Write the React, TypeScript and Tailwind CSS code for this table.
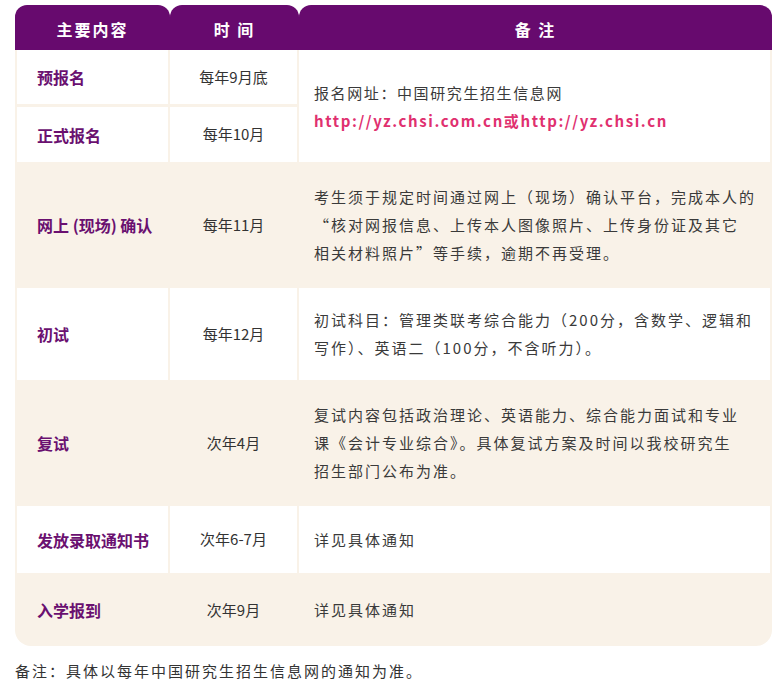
import { Fragment } from "react";

const purple = "text-[#6a1070]";

type Row = {
  label: string;
  time: string;
  note?: React.ReactNode;
  white: boolean;
};

const rows: Row[] = [
  { label: "网上 (现场) 确认", time: "每年11月", white: false, note: (
    <>
      <div>考生须于规定时间通过网上（现场）确认平台，完成本人的</div>
      <div>“核对网报信息、上传本人图像照片、上传身份证及其它</div>
      <div>相关材料照片”等手续，逾期不再受理。</div>
    </>
  ) },
  { label: "初试", time: "每年12月", white: true, note: (
    <>
      <div>初试科目：管理类联考综合能力（200分，含数学、逻辑和</div>
      <div>写作）、英语二（100分，不含听力）。</div>
    </>
  ) },
  { label: "复试", time: "次年4月", white: false, note: (
    <>
      <div>复试内容包括政治理论、英语能力、综合能力面试和专业</div>
      <div>课《会计专业综合》。具体复试方案及时间以我校研究生</div>
      <div>招生部门公布为准。</div>
    </>
  ) },
  { label: "发放录取通知书", time: "次年6-7月", white: true, note: <div>详见具体通知</div> },
  { label: "入学报到", time: "次年9月", white: false, note: <div>详见具体通知</div> },
];

function LabelCell({ text, white }: { text: string; white: boolean }) {
  return (
    <div className={`flex items-center pl-[20px] text-[16px] font-bold ${purple} ${white ? "bg-white" : ""}`}>
      {text}
    </div>
  );
}

function TimeCell({ text, white }: { text: string; white: boolean }) {
  return (
    <div className={`flex items-center justify-center text-[15px] text-[#333] ${white ? "bg-white" : ""}`}>
      {text}
    </div>
  );
}

function NoteCell({ children, white }: { children: React.ReactNode; white: boolean }) {
  return (
    <div className={`flex flex-col justify-center whitespace-nowrap pl-[15px] text-[15px] leading-[28px] tracking-[2px] text-[#3a3a3a] ${white ? "bg-white" : ""}`}>
      {children}
    </div>
  );
}

export default function App() {
  return (
    <div
      className="min-h-[691px] w-[780px] bg-white pt-[5px]"
      style={{ fontFamily: '"Noto Sans CJK SC", "Noto Sans", sans-serif' }}
    >
      <div className="mx-[15px] w-[757px]">
        {/* header tabs */}
        <div className="grid h-[45px] grid-cols-[155px_129px_1fr] bg-white text-[16px] font-bold tracking-[2px] text-white">
          <div className="flex items-center justify-center rounded-t-[12px] bg-[#670a6e] pt-[3px]">主要内容</div>
          <div className="flex items-center justify-center rounded-t-[12px] bg-[#670a6e] pt-[3px]">时 间</div>
          <div className="flex items-center justify-center rounded-t-[12px] bg-[#670a6e] pt-[3px]">备 注</div>
        </div>

        {/* body */}
        <div className="grid grid-cols-[151px_127px_1fr] grid-rows-[54px_55px_120px_92px_120px_67px_68px] gap-x-[2px] gap-y-[3px] rounded-b-[16px] bg-[#f9f2e8] px-[2px] pb-[2px]">
          <LabelCell text="预报名" white />
          <TimeCell text="每年9月底" white />
          <div className="row-span-2 flex flex-col justify-center whitespace-nowrap bg-white pl-[15px] pt-[2px] text-[15px] leading-[28px]">
            <div className="tracking-[1.6px] text-[#3a3a3a]">报名网址：中国研究生招生信息网</div>
            <div className="font-semibold tracking-[1.6px] text-[#e0306f]">http://yz.chsi.com.cn或http://yz.chsi.cn</div>
          </div>
          <LabelCell text="正式报名" white />
          <TimeCell text="每年10月" white />

          {rows.map((r) => (
            <Fragment key={r.label}>
              <LabelCell text={r.label} white={r.white} />
              <TimeCell text={r.time} white={r.white} />
              <NoteCell white={r.white}>{r.note}</NoteCell>
            </Fragment>
          ))}
        </div>

        <div className="mt-[14px] text-[15px] tracking-[2px] text-[#333]">
          备注：具体以每年中国研究生招生信息网的通知为准。
        </div>
      </div>
    </div>
  );
}
